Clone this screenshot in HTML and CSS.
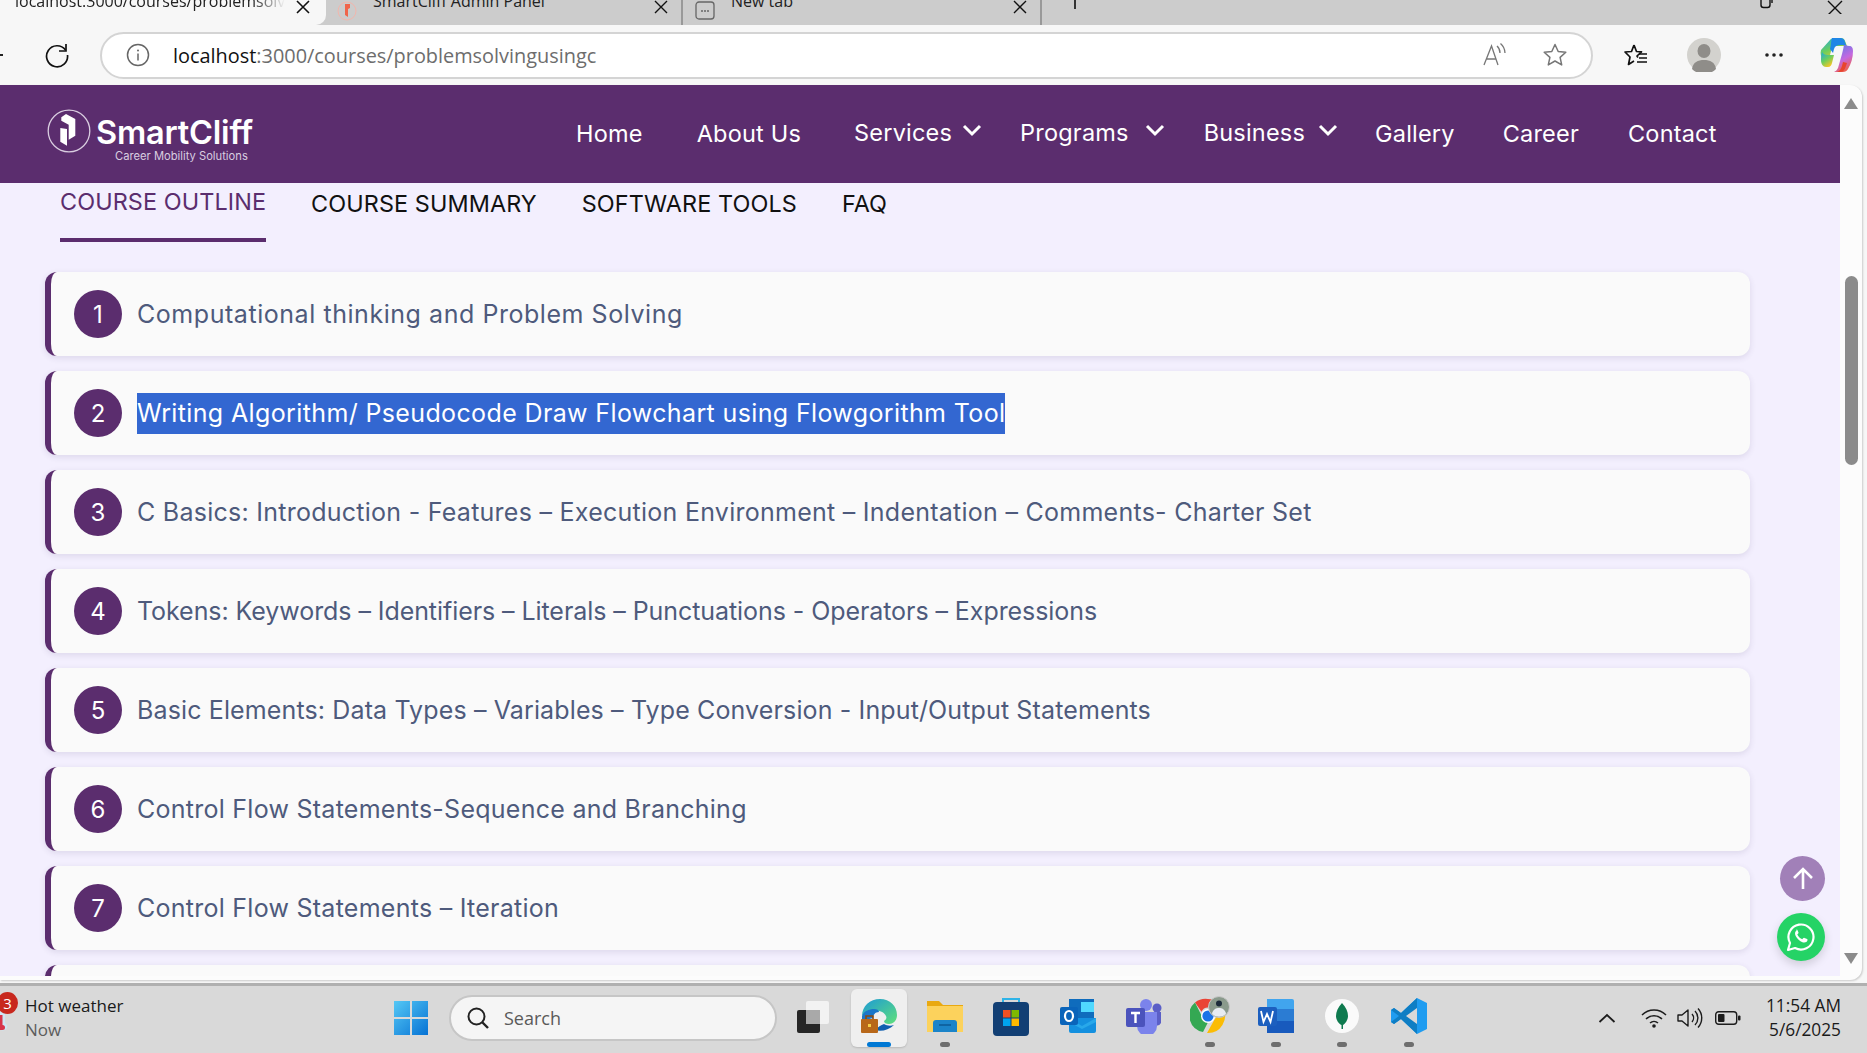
FILE: index.html
```html
<!DOCTYPE html>
<html>
<head>
    <title>Problem Solving using C</title>
    <link rel="stylesheet" href="styles.css">
</head>
<body>
    <div class="tabstrip">
        <div class="tab tab-active">
            <span class="tab-title tab-fade">localhost:3000/courses/problemsolvingusingc</span>
            <svg class="tab-x" width="14" height="14" viewBox="0 0 14 14"><path d="M1 1l12 12M13 1L1 13" stroke="#111" stroke-width="1.6"/></svg>
        </div>
        <div class="tab tab-second">
            <svg class="tab-ico" width="20" height="20" viewBox="0 0 20 20"><circle cx="10" cy="10" r="9" fill="none" stroke="#f3b6ac"/><path d="M8 3h5v4l-2 1v8l-3-2z" fill="#f0644a"/></svg>
            <span class="tab-title">SmartCliff Admin Panel</span>
            <svg class="tab-x" width="14" height="14" viewBox="0 0 14 14"><path d="M1 1l12 12M13 1L1 13" stroke="#111" stroke-width="1.4"/></svg>
        </div>
        <div class="tab tab-third">
            <svg class="tab-ico" width="20" height="20" viewBox="0 0 20 20"><rect x="1" y="1" width="18" height="17" rx="3" fill="none" stroke="#666" stroke-width="1.3"/><path d="M6 10h2M9 10h2M12 10h2" stroke="#666" stroke-width="1.5"/></svg>
            <span class="tab-title">New tab</span>
            <svg class="tab-x" width="14" height="14" viewBox="0 0 14 14"><path d="M1 1l12 12M13 1L1 13" stroke="#111" stroke-width="1.4"/></svg>
        </div>
        <div class="tab-plus"></div>
        <div class="win-controls">
            <svg width="16" height="10" viewBox="0 0 16 10"><path d="M2 0v5a2.500 2.500 0 0 0 2.500 2.500h4A2.500 2.500 0 0 0 11 5V0M13 0v3" fill="none" stroke="#111" stroke-width="1.4"/></svg>
            <svg width="16" height="14" viewBox="0 0 16 14"><path d="M1 1l14 14M15 1L1 15" stroke="#111" stroke-width="1.4"/></svg>
        </div>
    </div>

    <div class="toolbar">
        <span class="back-stub"></span>
        <svg class="reload" width="26" height="26" viewBox="0 0 26 26"><path d="M21.500 8A10.500 10.500 0 1 0 23.500 13" fill="none" stroke="#111" stroke-width="1.7"/><path d="M22 2v7h-7" fill="none" stroke="#111" stroke-width="1.7"/></svg>
        <div class="address">
            <svg class="info" width="24" height="24" viewBox="0 0 24 24"><circle cx="12" cy="12" r="10.500" fill="none" stroke="#666" stroke-width="1.5"/><path d="M12 10.500v7" stroke="#666" stroke-width="1.500"/><circle cx="12" cy="7.500" r="1" fill="#666"/></svg>
            <span class="url"><b>localhost</b>:3000/courses/problemsolvingusingc</span>
            <svg class="read-aloud" width="26" height="26" viewBox="0 0 26 26"><path d="M2 23L9.500 4 16 23M4.500 17h9.500" fill="none" stroke="#777" stroke-width="1.3"/><path d="M15 4a9 9 0 0 1 3 7M18.500 1.500A13 13 0 0 1 23 11" fill="none" stroke="#777" stroke-width="1.3"/></svg>
            <svg class="star" width="26" height="26" viewBox="0 0 26 26"><path d="M13 2.500l3.200 7 7.600.8-5.700 5.100 1.600 7.500L13 19l-6.700 3.900 1.600-7.500-5.700-5.100 7.600-.8z" fill="none" stroke="#777" stroke-width="1.500" stroke-linejoin="round"/></svg>
        </div>
        <svg class="fav" width="26" height="26" viewBox="0 0 26 26"><path d="M11 3l2.500 6.500 5 .3-4.500 4.200 1 1.500M11 3L8.500 9.500 2 10l5 5-1.500 7.500 5.500-3.500" fill="none" stroke="#111" stroke-width="1.700" stroke-linejoin="round"/><path d="M16 12h8M16 16h8M14 20h10" stroke="#111" stroke-width="1.700"/></svg>
        <svg class="avatar" width="34" height="34" viewBox="0 0 34 34"><circle cx="17" cy="17" r="17" fill="#d3d2ce"/><ellipse cx="17" cy="13" rx="6.500" ry="7" fill="#8f8d89"/><path d="M5 31c1-7 6-9 12-9s11 2 12 9a17 17 0 0 1-24 0z" fill="#8f8d89"/></svg>
        <svg class="dots" width="20" height="6" viewBox="0 0 20 6"><circle cx="3" cy="3" r="1.800" fill="#222"/><circle cx="10" cy="3" r="1.800" fill="#222"/><circle cx="17" cy="3" r="1.800" fill="#222"/></svg>
        <svg class="copilot" width="34" height="36" viewBox="0 0 34 36">
            <defs>
                <linearGradient id="cpA" x1="0" y1="0" x2=".6" y2="1"><stop offset="0" stop-color="#1aa5e8"/><stop offset=".55" stop-color="#6ccf5c"/><stop offset="1" stop-color="#f8c626"/></linearGradient>
                <linearGradient id="cpB" x1=".3" y1="0" x2=".7" y2="1"><stop offset="0" stop-color="#5a7be8"/><stop offset=".55" stop-color="#c468e0"/><stop offset="1" stop-color="#f4603a"/></linearGradient>
            </defs>
            <path d="M10 3c1-1.500 3-2 5-2h6c2 0 3.500 1 4 3l2 5H15c-2 0-3 1-3.500 3L9 22 3 22c-2-2-3-5-2-9z" fill="url(#cpA)"/>
            <path d="M8 18h6l-2 8c-.5 2-1.500 4-4 4H6c-3 0-5-3-5-7 0-2 0-5 1-8 1 2 3 3 6 3z" fill="url(#cpA)"/>
            <path d="M24 6c1 2 3 3 5 3 3 0 4 2 4 5 0 7-2 13-5 18-1 2-3 3-5 3h-9c2-1 3-2 4-4l4-14c1-4 2-8 2-11z" fill="url(#cpB)"/>
            <path d="M12 1h8c3 0 4 1 5 4l1 3h-6c-3 0-5 1-6 4l-1 4-3-4c1-4 1-8 2-11z" fill="#1f86e6"/>
            <path d="M17 35c3-1 4-3 5-6l1-4 4 1c-1 3-2 6-3 7-1 2-3 2-7 2z" fill="#e8452c"/>
        </svg>
    </div>

    <div class="viewport">
        <div class="page">
            <header class="site-nav">
                <div class="logo">
                    <svg class="logo-mark" width="44" height="44" viewBox="0 0 44 44"><circle cx="22" cy="22" r="20.800" fill="none" stroke="#d9cde0" stroke-width="1.300"/><path d="M14.300 8.300L19 5l9.300 5v16.700l-6.600 4V15.700l-7.400-4z" fill="#fff"/><path d="M13.300 19l6.700 1v16.700l-6.700-4z" fill="#fff"/></svg>
                    <div class="logo-words">
                        <div class="logo-name">SmartCliff</div>
                        <div class="logo-tag">Career Mobility Solutions</div>
                    </div>
                </div>
                <nav class="nav-links">
                    <a class="nav-home">Home</a>
                    <a class="nav-about">About Us</a>
                    <a class="nav-drop nav-services">Services <svg width="20" height="13" viewBox="0 0 20 13"><path d="M2 2l8 8 8-8" fill="none" stroke="#fff" stroke-width="3"/></svg></a>
                    <a class="nav-drop nav-programs">Programs <svg width="20" height="13" viewBox="0 0 20 13"><path d="M2 2l8 8 8-8" fill="none" stroke="#fff" stroke-width="3"/></svg></a>
                    <a class="nav-drop nav-business">Business <svg width="20" height="13" viewBox="0 0 20 13"><path d="M2 2l8 8 8-8" fill="none" stroke="#fff" stroke-width="3"/></svg></a>
                    <a class="nav-gallery">Gallery</a>
                    <a class="nav-career">Career</a>
                    <a>Contact</a>
                </nav>
            </header>

            <div class="course-tabs">
                <a class="course-tab course-tab-active">COURSE OUTLINE</a>
                <a class="course-tab">COURSE SUMMARY</a>
                <a class="course-tab">SOFTWARE TOOLS</a>
                <a class="course-tab">FAQ</a>
            </div>

            <div class="outline">
                <div class="outline-item"><span class="num">1</span><span class="outline-text fit-1">Computational thinking and Problem Solving</span></div>
                <div class="outline-item"><span class="num">2</span><span class="outline-text fit-2 selected">Writing Algorithm/ Pseudocode Draw Flowchart using Flowgorithm Tool</span></div>
                <div class="outline-item"><span class="num">3</span><span class="outline-text fit-3">C Basics: Introduction - Features – Execution Environment – Indentation – Comments- Charter Set</span></div>
                <div class="outline-item"><span class="num">4</span><span class="outline-text fit-4">Tokens: Keywords – Identifiers – Literals – Punctuations - Operators – Expressions</span></div>
                <div class="outline-item"><span class="num">5</span><span class="outline-text fit-5">Basic Elements: Data Types – Variables – Type Conversion - Input/Output Statements</span></div>
                <div class="outline-item"><span class="num">6</span><span class="outline-text fit-3">Control Flow Statements-Sequence and Branching</span></div>
                <div class="outline-item"><span class="num">7</span><span class="outline-text fit-3">Control Flow Statements – Iteration</span></div>
                <div class="outline-item"></div>
            </div>

            <button class="float-up">
                <svg width="24" height="24" viewBox="0 0 24 24"><path d="M12 22V3M3 11l9-9 9 9" fill="none" stroke="#fff" stroke-width="2.600"/></svg>
            </button>
            <button class="float-wa">
                <svg width="30" height="30" viewBox="0 0 30 30"><path d="M2 28l2-7A12.500 12.500 0 1 1 9 26z" fill="none" stroke="#fff" stroke-width="2.200" stroke-linejoin="round"/><path d="M10.500 8.500c-1.500 1-2 3-.800 5.500 1.500 3 4 5.200 6.800 6.200 2.500.8 4.500-.2 5-2 .2-.7-.2-1-1-1.400l-2-.9c-.6-.3-1-.1-1.400.4l-.8 1c-2-.8-4-2.600-5-4.800l.9-1c.4-.4.400-.8.200-1.300l-.9-2c-.3-.600-.600-.7-1-.700z" fill="#fff"/></svg>
            </button>
        </div>
        <div class="scrollbar">
            <span class="arrow-up"></span>
            <span class="thumb"></span>
            <span class="arrow-down"></span>
        </div>
    </div>

    <footer class="taskbar">
        <div class="weather">
            <svg class="thermo" width="9" height="20" viewBox="0 0 9 20"><path d="M0 0h5v11a4 4 0 1 1-5 6z" fill="#cfe6f5"/><path d="M0 3h2.500v10a2.500 2.500 0 0 1 0 5H0z" fill="#d8344a"/></svg>
            <span class="weather-badge">3</span>
            <div class="weather-main">Hot weather</div>
            <div class="weather-sub">Now</div>
        </div>
        <svg class="start" width="36" height="36" viewBox="0 0 36 36">
            <defs><linearGradient id="winG" x1="0" y1="0" x2="1" y2="1"><stop offset="0" stop-color="#55c8f5"/><stop offset="1" stop-color="#0672d4"/></linearGradient></defs>
            <path d="M1 1h16v16H1zM19 1h16v16H19zM1 19h16v16H1zM19 19h16v16H19z" fill="url(#winG)"/>
        </svg>
        <div class="search">
            <svg width="24" height="24" viewBox="0 0 24 24"><circle cx="10.500" cy="10.500" r="8" fill="none" stroke="#222" stroke-width="2"/><path d="M16 16l6 6" stroke="#222" stroke-width="2.400"/></svg>
            <span>Search</span>
        </div>
        <div class="apps">
            <div class="app">
                <svg width="36" height="36" viewBox="0 0 36 36"><rect x="11" y="3" width="23" height="23" rx="2" fill="#f2f2f2"/><rect x="2" y="12" width="23" height="23" rx="2" fill="#262626"/><rect x="11" y="12" width="14" height="14" fill="#a9a9a9"/></svg>
            </div>
            <div class="app app-current">
                <svg width="38" height="38" viewBox="0 0 38 38">
                    <defs><linearGradient id="edgeG" x1="0" y1="0" x2="1" y2="1"><stop offset="0" stop-color="#1d9ad6"/><stop offset="1" stop-color="#5fe07a"/></linearGradient></defs>
                    <path d="M2 19C2 9 10 2 20 2c10 0 17 7 17 16 0 6-4 9-8 9-3 0-5-1-5-3 2-1 3-3 2-5-2-5-8-6-13-5-5 1-9 2-11 5z" fill="url(#edgeG)"/>
                    <path d="M2 19c2-5 7-7 12-7 3 0 5 1 5 3-4 0-6 3-6 6l-11 3z" fill="#1976c9"/>
                    <path d="M15 33c6 2 14 0 19-5-3 1-7 1-10-1-3 1-6 3-9 6z" fill="#0f5fb0"/>
                    <rect x="1" y="22" width="17" height="14" rx="1" fill="#b8681a"/>
                    <path d="M6 22v-3h7v3" fill="none" stroke="#8a4a10" stroke-width="1.600"/>
                    <rect x="8" y="27" width="3" height="3" fill="#f6d04a"/>
                </svg>
            </div>
            <div class="app app-open">
                <svg width="36" height="36" viewBox="0 0 36 36"><path d="M0 3h12l4 4h20v27H0z" fill="#e9a911"/><path d="M0 8h36v26H0z" fill="#fcd25c"/><path d="M6 34V25a3 3 0 0 1 3-3h18a3 3 0 0 1 3 3v9z" fill="#1b84c9"/><path d="M12 27h12" stroke="#0d5a94" stroke-width="1.500"/></svg>
            </div>
            <div class="app">
                <svg width="36" height="40" viewBox="0 0 36 40"><path d="M10 7V3h16v4" fill="none" stroke="#2fb4e8" stroke-width="2"/><rect y="6" width="36" height="34" rx="4" fill="#123f74"/><rect x="10" y="14" width="7.500" height="7.500" fill="#f25022"/><rect x="18.500" y="14" width="7.500" height="7.500" fill="#7fba00"/><rect x="10" y="22.500" width="7.500" height="7.500" fill="#00a4ef"/><rect x="18.500" y="22.500" width="7.500" height="7.500" fill="#ffb900"/></svg>
            </div>
            <div class="app">
                <svg width="36" height="36" viewBox="0 0 36 36"><rect x="9" y="1" width="25" height="20" fill="#0f6cbd"/><rect x="21" y="4" width="13" height="10" fill="#50d9ff"/><path d="M9 20h27v13a2 2 0 0 1-2 2H11a2 2 0 0 1-2-2z" fill="#1490df"/><path d="M9 20l13 8 14-8v4l-14 7-13-7z" fill="#28a8ea"/><rect y="9" width="18" height="18" rx="2" fill="#0a64ba"/><ellipse cx="9" cy="18" rx="4" ry="5" fill="none" stroke="#fff" stroke-width="2.200"/></svg>
            </div>
            <div class="app">
                <svg width="36" height="36" viewBox="0 0 36 36"><circle cx="20" cy="7" r="6" fill="#7b83eb"/><circle cx="31" cy="10" r="4.500" fill="#5b5fc7"/><path d="M26 14h9v11a5 5 0 0 1-9 0z" fill="#5b5fc7"/><path d="M11 14h20v14a10 10 0 0 1-20 0z" fill="#7b83eb"/><rect y="10" width="19" height="19" rx="2" fill="#4b53bc"/><path d="M5 15h9M9.500 15v10" stroke="#fff" stroke-width="2.400"/></svg>
            </div>
            <div class="app app-open">
                <svg width="40" height="40" viewBox="0 0 40 40">
                    <path d="M18 3a17 17 0 0 1 14.700 8.500H18a7 7 0 0 0-6.500 4.300L5 6.500A17 17 0 0 1 18 3z" fill="#ea4335"/>
                    <path d="M5 6.500l7 14a7 7 0 0 0 7 3.800L13 36A17 17 0 0 1 5 6.500z" fill="#34a853"/>
                    <path d="M32.700 11.500a17 17 0 0 1-15.700 25.500l7.800-14a7 7 0 0 0-.800-11.500z" fill="#fbbc05"/>
                    <circle cx="18" cy="20" r="7" fill="#fff"/><circle cx="18" cy="20" r="5.600" fill="#1a73e8"/>
                    <circle cx="29" cy="11" r="10.500" fill="#8a9a8c" stroke="#c8c8c8"/>
                    <circle cx="29" cy="7.500" r="3" fill="#1c2a3a"/><path d="M22 18c1-5 4-6 7-6s6 1 7 6a10 10 0 0 1-14 0z" fill="#e8ecf2"/>
                </svg>
            </div>
            <div class="app app-open">
                <svg width="36" height="36" viewBox="0 0 36 36"><path d="M9 1h25a2 2 0 0 1 2 2v8H9z" fill="#41a5ee"/><rect x="9" y="11" width="27" height="12" fill="#2b7cd3"/><rect x="9" y="23" width="27" height="12" fill="#185abd"/><rect y="9" width="19" height="19" rx="2" fill="#1c5fbf"/><path d="M3 13l2.500 11 3.500-8 3.500 8L15 13" fill="none" stroke="#fff" stroke-width="1.800"/></svg>
            </div>
            <div class="app app-open">
                <svg width="36" height="36" viewBox="0 0 36 36"><circle cx="18" cy="18" r="17" fill="#fafafa"/><path d="M18 5c4 4 6 9 6 13s-3 8-5 9v4h-1.500v-4C15 26 12 22 12 18S14 9 18 5z" fill="#0f7a4f"/></svg>
            </div>
            <div class="app app-open">
                <svg width="36" height="36" viewBox="0 0 36 36"><path d="M26 0l10 5v26l-10 5L10 21l-7 5-3-2v-12l3-2 7 5z" fill="#1f9cf0"/><path d="M26 0v36L10 21 3 26l-3-2 8-6-8-6 3-2 7 5z" fill="#0f7ec4"/><path d="M26 10L15 18l11 8z" fill="#d9d9d9"/></svg>
            </div>
        </div>
        <div class="tray">
            <svg class="tray-chev" width="18" height="10" viewBox="0 0 18 10"><path d="M1.500 9L9 2l7.500 7" fill="none" stroke="#1c1c1c" stroke-width="1.800"/></svg>
            <svg class="tray-wifi" width="26" height="20" viewBox="0 0 26 20"><path d="M1 7a17 17 0 0 1 24 0M5 11a11.500 11.500 0 0 1 16 0M9 15a6 6 0 0 1 8 0" fill="none" stroke="#1c1c1c" stroke-width="1.500"/><circle cx="13" cy="18" r="1.800" fill="#1c1c1c"/></svg>
            <svg class="tray-vol" width="26" height="22" viewBox="0 0 26 22"><path d="M1 8v6h4l6 5V3L5 8z" fill="none" stroke="#1c1c1c" stroke-width="1.400" stroke-linejoin="round"/><path d="M15 7a6 6 0 0 1 0 8M18 4a10 10 0 0 1 0 14M21 1.500a14 14 0 0 1 0 19" fill="none" stroke="#1c1c1c" stroke-width="1.400"/></svg>
            <svg class="tray-bat" width="26" height="14" viewBox="0 0 26 14"><rect x=".7" y=".7" width="21" height="12.600" rx="3" fill="none" stroke="#1c1c1c" stroke-width="1.400"/><rect x="3" y="3" width="6.500" height="8" rx="1" fill="#1c1c1c"/><rect x="23" y="4.500" width="2.500" height="5" rx="1" fill="#1c1c1c"/></svg>
            <div class="clock"><div>11:54 AM</div><div>5/6/2025</div></div>
        </div>
    </footer>
</body>
</html>
```

FILE: styles.css
```css
* {
    box-sizing: border-box;
}

html, body {
    margin: 0;
    padding: 0;
    overflow: hidden;
}

body {
    width: 1867px;
    height: 1053px;
    background-color: #f7f7f7;
    font-family: "Open Sans", sans-serif;
    display: flex;
    flex-direction: column;
}

/* browser tabs, the top of this strip is cut off */
.tabstrip {
    height: 25px;
    flex: none;
    background-color: #cccccc;
    display: flex;
    overflow: hidden;
}

.tab {
    height: 25px;
    display: flex;
    align-items: flex-end;
    padding-bottom: 13px;
    font-size: 16px;
    line-height: 22px;
    color: #222;
    flex: none;
}

.tab-active {
    width: 326px;
    background-color: #f7f7f7;
    border-bottom-right-radius: 10px;
    padding-left: 15px;
}

.tab-second {
    width: 357px;
    padding-left: 11px;
    border-right: 2px solid #999;
}

.tab-third {
    width: 359px;
    padding-left: 12px;
    border-right: 2px solid #999;
}

.tab-title {
    white-space: nowrap;
    overflow: hidden;
}

.tab-fade {
    width: 270px;
    -webkit-mask-image: linear-gradient(to right, #000 88%, transparent);
    mask-image: linear-gradient(to right, #000 88%, transparent);
}

.tab-second .tab-title {
    margin-left: 16px;
    width: 281px;
}

.tab-third .tab-title {
    margin-left: 16px;
    width: 282px;
}

.tab-ico {
    margin-bottom: -9px;
}

.tab-x {
    margin-bottom: -2px;
}

.tab-active .tab-x {
    margin-left: 11px;
}

.tab-plus {
    width: 2px;
    height: 9px;
    margin-left: 32px;
    background-color: #333;
    flex: none;
}

.win-controls {
    margin-left: auto;
    display: flex;
    align-items: flex-start;
    gap: 52px;
    padding-right: 24px;
}

/* browser toolbar */
.toolbar {
    height: 60px;
    flex: none;
    display: flex;
    align-items: center;
    background-color: #f7f7f7;
}

.back-stub {
    width: 3px;
    height: 2px;
    background-color: #222;
    margin-right: 41px;
}

.reload {
    margin-right: 30px;
}

.address {
    width: 1493px;
    height: 47px;
    background-color: #fff;
    border: 2px solid #d4d4d4;
    border-radius: 24px;
    display: flex;
    align-items: center;
    padding-left: 24px;
}

.url {
    margin-left: 23px;
    font-size: 19.900px;
    color: #6d6d6d;
    flex: 1;
}

.url b {
    font-weight: 400;
    color: #111;
}

.read-aloud {
    margin-right: 34px;
}

.star {
    margin-right: 23px;
}

.fav {
    margin-left: 30px;
}

.avatar {
    margin-left: 38px;
}

.dots {
    margin-left: 43px;
}

.copilot {
    margin-left: 36px;
}

/* page area plus its scrollbar */
.viewport {
    height: 895px;
    flex: none;
    width: 1862px;
    background-color: #fcfcfc;
    border-radius: 0 12px 12px 0;
    box-shadow: 1px 1px 2px rgba(0, 0, 0, 0.18);
    display: flex;
    align-items: flex-start;
}

.page {
    width: 1840px;
    height: 891px;
    flex: none;
    background-color: #f3effe;
    position: relative;
    overflow: hidden;
    font-family: Inter, sans-serif;
}

.site-nav {
    height: 98px;
    background-color: #5b2d6e;
    display: flex;
    align-items: center;
    padding-left: 47px;
}

.logo {
    display: flex;
    align-items: flex-start;
    width: 529px;
    margin-top: 2px;
    flex: none;
}

.logo-mark {
    flex: none;
}

.logo-words {
    margin-top: 9px;
    height: 44px;
}

.logo-name {
    font-size: 32.500px;
    font-weight: 600;
    line-height: 30px;
    color: #fff;
    margin-left: 5px;
    letter-spacing: -0.2px;
}

.logo-tag {
    font-size: 11.200px;
    line-height: 14px;
    color: #d9cde0;
    margin-left: 24px;
    margin-top: 1px;
    white-space: nowrap;
}

.nav-links {
    display: flex;
    align-items: center;
    font-size: 23.500px;
    color: #fff;
    white-space: nowrap;
    letter-spacing: 0.2px;
    margin-top: -1px;
}

.nav-links a {
    display: flex;
    align-items: center;
}

.nav-home { margin-right: 54px; }
.nav-about { margin-right: 53px; }
.nav-drop { margin-top: -2px; }
.nav-drop svg { margin-left: 10px; margin-top: -4px; }
.nav-services { margin-right: 38px; }
.nav-programs { margin-right: 39px; }
.nav-programs svg { margin-left: 16px; }
.nav-business { margin-right: 37px; }
.nav-business svg { margin-left: 13px; }
.nav-gallery { margin-right: 48px; }
.nav-career { margin-right: 49px; }

.course-tabs {
    height: 59px;
    display: flex;
    align-items: flex-start;
    padding-left: 60px;
    gap: 45px;
    font-size: 23.400px;
    color: #111;
}

.course-tab {
    padding-top: 6px;
    letter-spacing: 0.1px;
}

.course-tab-active {
    height: 59px;
    padding-top: 4px;
    color: #5b2d6e;
    border-bottom: 4px solid #5b2d6e;
}

.outline {
    margin: 30px 0 0 45px;
    width: 1705px;
    display: flex;
    flex-direction: column;
    gap: 15px;
}

.outline-item {
    height: 84px;
    flex: none;
    background-color: #fafafa;
    border-left: 6px solid #5b2d6e;
    border-radius: 12px;
    box-shadow: 0 2px 6px rgba(60, 40, 90, 0.12);
    display: flex;
    align-items: center;
    padding-left: 23px;
}

.num {
    width: 48px;
    height: 48px;
    flex: none;
    border-radius: 50%;
    background-color: #5b2d6e;
    color: #fff;
    font-size: 24px;
    display: flex;
    align-items: center;
    justify-content: center;
    margin-right: 15px;
}

.outline-text {
    font-size: 25px;
    line-height: 40px;
    padding-bottom: 1px;
    color: #4e5a7c;
    white-space: nowrap;
}

/* Montserrat is not installed, spacing keeps each row at its original length */
.fit-1 { letter-spacing: 0.55px; }
.fit-2 { letter-spacing: 0.37px; }
.fit-3 { letter-spacing: 0.26px; }
.fit-4 { letter-spacing: -0.07px; }
.fit-5 { letter-spacing: 0.13px; }

.selected {
    background-color: #3367d1;
    color: #fff;
}

.float-up, .float-wa {
    position: absolute;
    border: none;
    padding: 0;
    border-radius: 50%;
    display: flex;
    align-items: center;
    justify-content: center;
}

.float-up {
    left: 1780px;
    top: 771px;
    width: 45px;
    height: 45px;
    background-color: #a180b8;
}

.float-wa {
    left: 1777px;
    top: 828px;
    width: 48px;
    height: 48px;
    background-color: #25d366;
    box-shadow: 0 4px 10px rgba(0, 0, 0, 0.15);
}

.scrollbar {
    width: 22px;
    height: 891px;
    flex: none;
    position: relative;
}

.arrow-up, .arrow-down, .thumb {
    position: absolute;
    left: 4px;
}

.arrow-up {
    top: 13px;
    width: 0;
    height: 0;
    border-left: 7px solid transparent;
    border-right: 7px solid transparent;
    border-bottom: 11px solid #8b8b8b;
}

.thumb {
    left: 5px;
    top: 191px;
    width: 13px;
    height: 189px;
    border-radius: 7px;
    background-color: #8b8b8b;
}

.arrow-down {
    top: 868px;
    width: 0;
    height: 0;
    border-left: 7px solid transparent;
    border-right: 7px solid transparent;
    border-top: 11px solid #8b8b8b;
}

/* windows taskbar */
.taskbar {
    margin-top: 3px;
    height: 70px;
    flex: none;
    background-color: #d9d9d9;
    border-top: 3px solid #b0b0b0;
    padding-bottom: 4px;
    display: flex;
    align-items: center;
    position: relative;
}

.weather {
    width: 393px;
    flex: none;
    padding-left: 25px;
    font-size: 17px;
    line-height: 24px;
    color: #1a1a1a;
}

.weather-sub {
    color: #5c5c5c;
}

.weather-badge {
    position: absolute;
    left: -3px;
    top: 6px;
    width: 21px;
    height: 22px;
    border-radius: 50%;
    background-color: #c8281e;
    color: #fff;
    font-size: 15px;
    line-height: 22px;
    text-align: center;
}

.thermo {
    position: absolute;
    left: 0;
    top: 26px;
}

.start {
    flex: none;
}

.search {
    width: 328px;
    height: 46px;
    margin-left: 20px;
    flex: none;
    background-color: #f5f5f5;
    border: 2px solid #c6c6c6;
    border-radius: 23px;
    display: flex;
    align-items: center;
    gap: 14px;
    padding-left: 15px;
    font-size: 18px;
    color: #5a5a5a;
}

.apps {
    display: flex;
    margin-left: 3px;
    height: 100%;
    align-items: center;
    flex: none;
}

.app {
    width: 66.200px;
    height: 58px;
    display: flex;
    align-items: center;
    justify-content: center;
    position: relative;
    padding-bottom: 4px;
    flex: none;
}

.app-open::after {
    content: "";
    position: absolute;
    bottom: 0;
    left: 28px;
    width: 10px;
    height: 5px;
    border-radius: 3px;
    background-color: #6e6e6e;
}

.app-current {
    width: 56px;
    margin: 0 5px;
    background-color: #efefef;
    border-radius: 6px;
    box-shadow: 0 1px 2px rgba(0, 0, 0, 0.15);
}

.app-current::after {
    content: "";
    position: absolute;
    bottom: 0;
    left: 16px;
    width: 24px;
    height: 5px;
    border-radius: 3px;
    background-color: #0078d4;
}

.tray {
    margin-left: auto;
    display: flex;
    align-items: center;
    padding-right: 26px;
}

.tray-chev { margin-right: 25px; }
.tray-wifi { margin-right: 10px; }
.tray-vol { margin-right: 12px; }
.tray-bat { margin-right: 25px; }

.clock {
    font-size: 17.300px;
    line-height: 24px;
    text-align: right;
    color: #1a1a1a;
}
```
